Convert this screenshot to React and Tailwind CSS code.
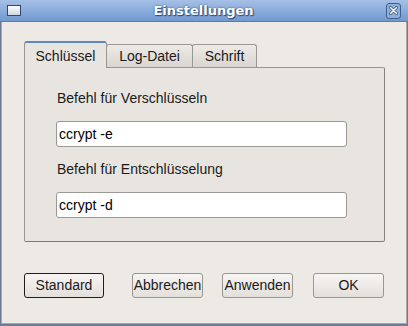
import React from 'react'

const font = { fontFamily: '"Liberation Sans", Arial, sans-serif' }

function Tab({ label, active, width }) {
  if (active) {
    return (
      <div className="relative z-10 -mb-px flex h-[27px] w-[83px] items-center justify-center rounded-t-[3px] border border-b-0 border-t-2 border-[#9a9791] border-t-[#5e88bd] bg-[#e8e5e1] pt-[1px] text-[14px] text-[#1a1a1a]">
        {label}
      </div>
    )
  }
  return (
    <div
      className="-ml-px flex h-[23px] items-center justify-center rounded-t-[3px] border border-b-0 border-[#9a9791] bg-gradient-to-b from-[#eeebe7] to-[#d9d5d0] pt-[1px] text-[14px] text-[#1a1a1a]"
      style={{ width }}
    >
      {label}
    </div>
  )
}

function Field({ label, value }) {
  return (
    <div className="flex flex-col">
      <div className="h-[16px] pl-[1px] text-[14px] leading-[16px] text-[#1a1a1a]">{label}</div>
      <div className="mt-[15px] flex h-[26px] w-[291px] items-center rounded-[3px] border border-[#9b9894] bg-white pl-[2px] text-[14px] text-black">
        {value}
      </div>
    </div>
  )
}

function Button({ label, width, focused }) {
  return (
    <button
      className={
        'flex h-[25px] items-center justify-center rounded-[3px] border bg-gradient-to-b from-[#f7f5f3] to-[#e3dfdb] text-[14px] text-[#1a1a1a] ' +
        (focused ? 'border-[#1e1e1e]' : 'border-[#9a9791]')
      }
      style={{ width }}
    >
      {label}
    </button>
  )
}

export default function App() {
  return (
    <div className="flex h-[326px] w-[408px] flex-col bg-[#6b7c94]" style={font}>
      {/* Titelleiste */}
      <div className="flex h-[22px] items-center border-b border-[#5f7ca6] bg-gradient-to-b from-[#a6c0e6] to-[#7199cf] px-[7px]">
        <div className="h-[11px] w-[14px] border border-[#2f4a70] bg-gradient-to-b from-[#ffffff] to-[#cfd6df]" />
        <div
          className="flex-1 text-center text-[13px] font-bold text-white [text-shadow:0_0_2px_#2a4a7a,1px_1px_1px_#2a4a7a]"
          style={{ fontFamily: '"DejaVu Sans", Verdana, sans-serif' }}
        >
          Einstellungen
        </div>
        <div className="flex h-[16px] w-[15px] items-center justify-center rounded-[3px] border border-[#3e5f8d] bg-[#8eaedb]">
          <svg width="9" height="9" viewBox="0 0 9 9">
            <path d="M1.5 1.5 L7.5 7.5 M7.5 1.5 L1.5 7.5" stroke="#2f4d79" strokeWidth="3" strokeLinecap="round" />
            <path d="M1.5 1.5 L7.5 7.5 M7.5 1.5 L1.5 7.5" stroke="#ffffff" strokeWidth="1.6" strokeLinecap="round" />
          </svg>
        </div>
      </div>

      {/* Inhalt */}
      <div className="mx-[1px] mb-[2px] flex flex-1 flex-col border-x border-b border-[#a8a6a2] bg-[#edeae6] px-[22px] pt-[19px]">
        <div className="flex items-end">
          <Tab label="Schlüssel" active />
          <Tab label="Log-Datei" width={87} />
          <Tab label="Schrift" width={65} />
        </div>
        <div className="flex h-[175px] w-[361px] flex-col gap-[14px] rounded-b-[2px] rounded-tr-[2px] border border-[#9a9791] border-b-[#7d7a76] border-r-[#85827e] bg-[#e8e5e1] pl-[31px] pt-[22px]">
          <Field label="Befehl für Verschlüsseln" value="ccrypt -e" />
          <Field label="Befehl für Entschlüsselung" value="ccrypt -d" />
        </div>
        <div className="mt-[31px] flex items-center">
          <Button label="Standard" width={81} focused />
          <div className="ml-[28px]"><Button label="Abbrechen" width={71} /></div>
          <div className="ml-[19px]"><Button label="Anwenden" width={71} /></div>
          <div className="ml-[20px]"><Button label="OK" width={71} /></div>
        </div>
      </div>
    </div>
  )
}
